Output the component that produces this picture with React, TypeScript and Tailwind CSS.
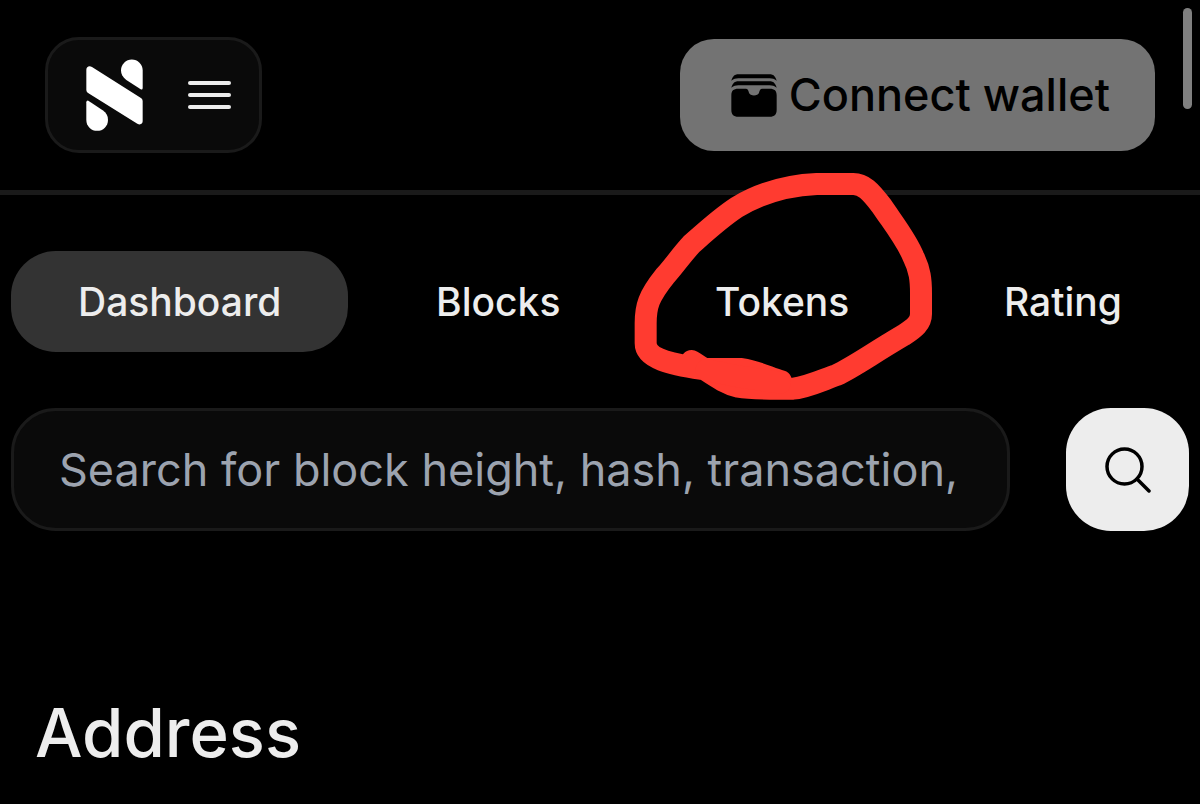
import React from "react";

const tabs = ["Dashboard", "Blocks", "Tokens", "Rating"];

function Logo() {
  return (
    <svg width="60" height="74" viewBox="165 113 180 222" fill="#fff" aria-hidden="true">
      <path d="M169 148C169 139 178 134 186 140L334 234Q338 237 338 242V303C338 311 330 315 322 310L173 217Q169 214 169 209Z" />
      <path d="M338 150V203Q338 209 332 207L289 179C278 171 273 162 273 150A32.500 32.500 0 0 1 338 150Z" />
      <path d="M169 299V246Q169 240 175 241L218 270C229 278 234 287 234 299A32.500 32.500 0 0 1 169 299Z" />
    </svg>
  );
}

function MenuIcon() {
  return (
    <svg width="43" height="28" viewBox="0 0 43 28" fill="#ededed" aria-hidden="true">
      <rect width="43" height="4" rx="2" />
      <rect y="12" width="43" height="4" rx="2" />
      <rect y="24" width="43" height="4" rx="2" />
    </svg>
  );
}

function WalletIcon() {
  return (
    <svg width="46" height="43" viewBox="0 0 138 129" fill="#000" aria-hidden="true">
      <path d="M1 20C5 7 11 1 22 1H116C127 1 133 7 137 20C130 15 124 13 116 13H22C14 13 8 15 1 20Z" />
      <path d="M1 41C5 28 11 22 22 22H116C127 22 133 28 137 41C130 36 124 34 116 34H22C14 34 8 36 1 41Z" />
      <path d="M22 44H44C51 44 52 49 54 56C57 67 81 67 84 56C86 49 87 44 94 44H116C131 44 137 50 137 64V107C137 121 131 128 116 128H22C7 128 1 121 1 107V64C1 50 7 44 22 44Z" />
    </svg>
  );
}

function SearchIcon() {
  return (
    <svg width="46" height="46" viewBox="0 0 46 46" fill="none" stroke="#000" strokeWidth="3.500" strokeLinecap="round" aria-hidden="true">
      <circle cx="19.500" cy="19.500" r="17.500" />
      <path d="M32 32L44 44" />
    </svg>
  );
}

function Scribble() {
  return (
    <svg
      className="absolute -left-7 -top-[91px] max-w-none pointer-events-none"
      width="330"
      height="250"
      viewBox="0 0 990 750"
      fill="none"
      stroke="#ff3b30"
      strokeWidth="66"
      strokeLinecap="round"
      strokeLinejoin="round"
      aria-hidden="true"
    >
      <path d="M215 603C275 640 310 670 355 680C400 688 460 686 520 686C560 682 600 663 650 645C700 622 750 585 850 526C885 504 903 488 903 462V400C903 360 900 330 880 290C860 240 820 190 785 138C750 92 730 72 700 72H590C500 76 420 100 350 142C300 175 260 212 215 252C180 290 165 315 135 348C85 410 77 440 77 490V550C77 595 150 612 245 627H365C410 634 440 650 483 664" />
      <path d="M260 630L360 650L480 668" />
    </svg>
  );
}

export default function App() {
  return (
    <div className="relative min-h-screen bg-black text-[#ededed] font-['Inter',sans-serif]">
      <header className="flex items-center justify-between px-[45px] py-[37px] border-b-[5px] border-[#1a1a1a]">
        <button
          aria-label="Menu"
          className="flex items-center gap-[43px] h-[116px] pl-[37px] pr-7 rounded-[34px] border-[3px] border-[#1a1a1a] bg-[#0a0a0a]"
        >
          <Logo />
          <MenuIcon />
        </button>
        <button className="flex items-center gap-3 h-28 pl-[51px] pr-[45px] rounded-[34px] bg-[#737373] text-black text-[45px] leading-[68px] font-medium">
          <WalletIcon />
          Connect wallet
        </button>
      </header>

      <main className="px-[11px] pt-14">
        <nav className="flex justify-between">
          {tabs.map((tab, index) => (
            <div key={tab} className="relative">
              <button
                className={
                  index === 0
                    ? "h-[101px] px-[67px] pt-px rounded-[45px] bg-[#333333] text-[39px] font-medium"
                    : "h-[101px] px-[67px] pt-px rounded-[45px] text-[39px] font-medium"
                }
              >
                {tab}
              </button>
              {tab === "Tokens" && <Scribble />}
            </div>
          ))}
        </nav>

        <form className="flex gap-14 mt-14" onSubmit={(e) => e.preventDefault()}>
          <input
            type="text"
            aria-label="Search"
            placeholder="Search for block height, hash, transaction,"
            className="flex-1 min-w-0 h-[123px] px-[45px] rounded-[45px] border-[3px] border-[#1a1a1a] bg-[#0a0a0a] text-[45px] placeholder:text-[#9ca3af] outline-none"
          />
          <button
            aria-label="Submit search"
            className="flex items-center justify-center size-[123px] shrink-0 rounded-[45px] bg-[#ededed]"
          >
            <SearchIcon />
          </button>
        </form>

        <h1 className="mt-[157px] px-6 pb-6 text-[67px] leading-[90px] font-medium">Address</h1>
      </main>

      <div className="absolute right-2 top-2 w-[9px] h-[101px] rounded-full bg-[#808080]" />
    </div>
  );
}
